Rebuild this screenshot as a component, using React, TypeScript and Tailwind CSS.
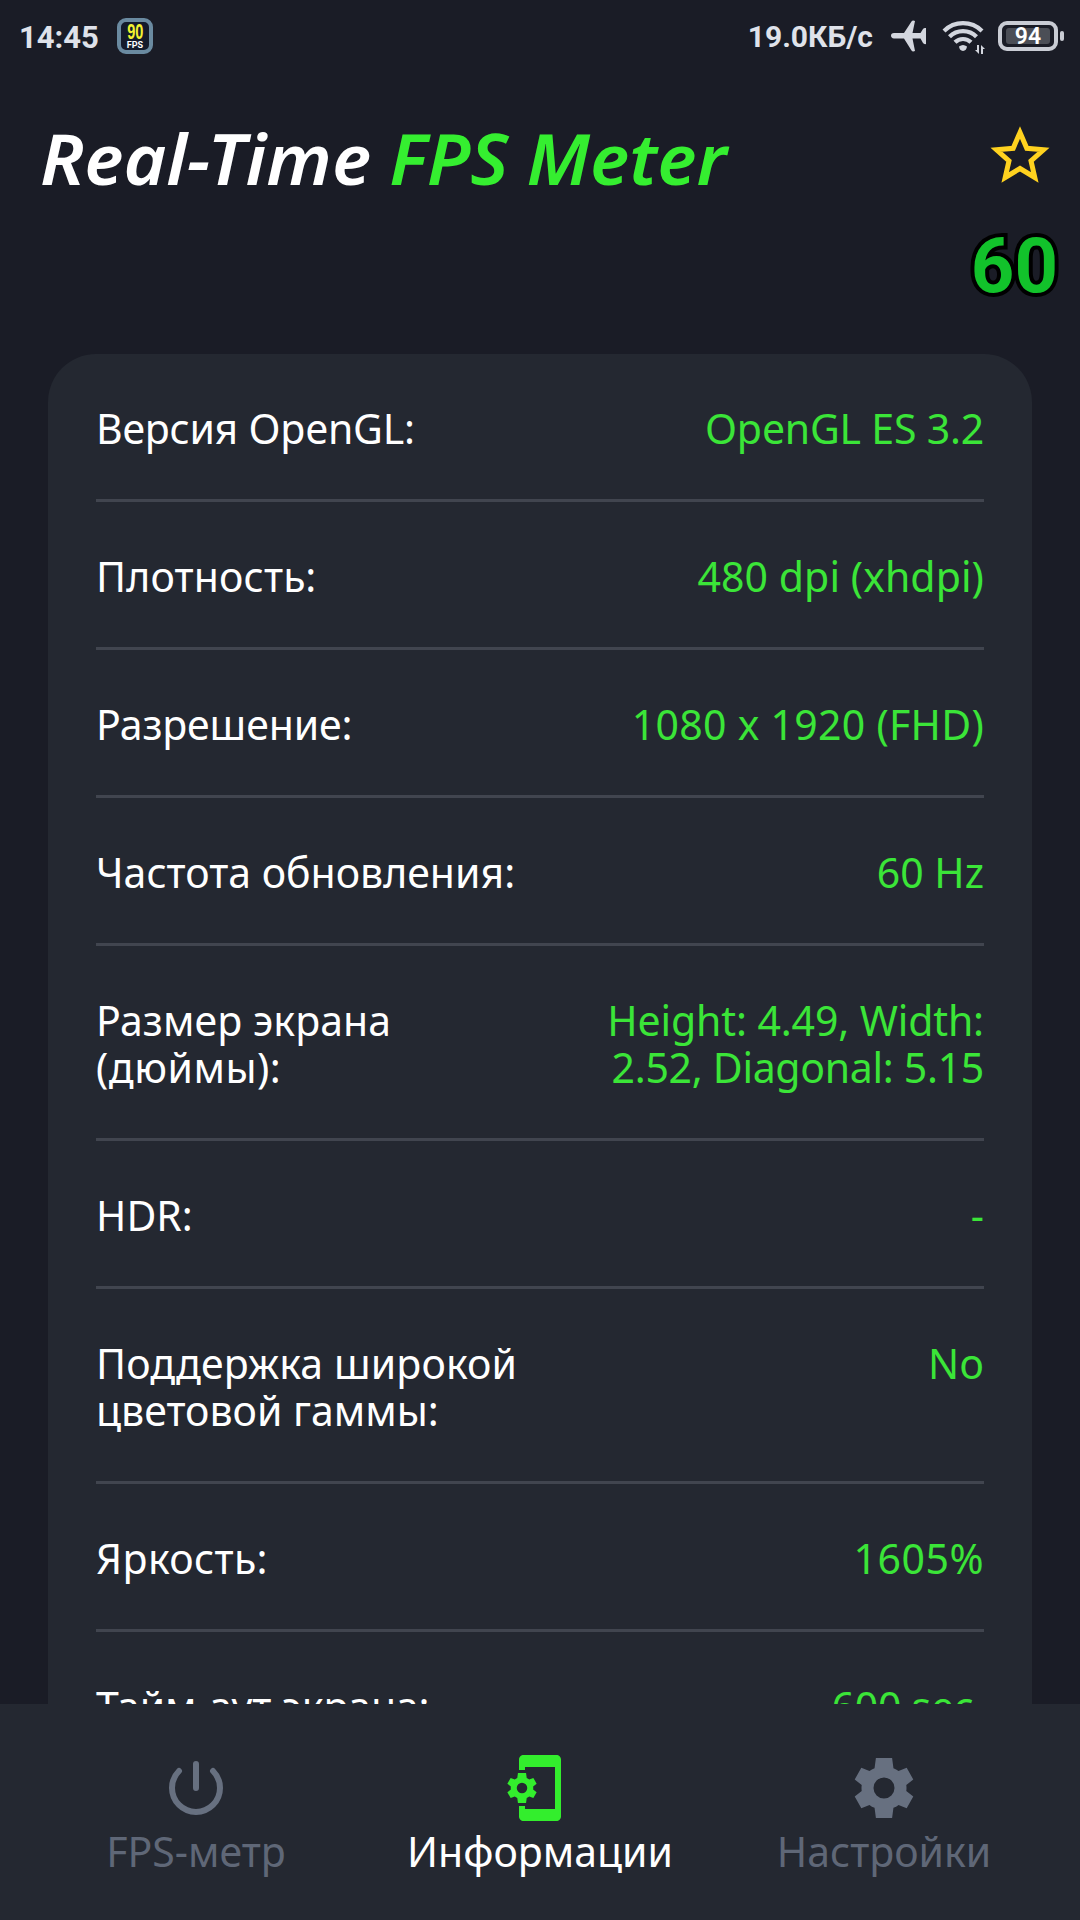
import type { ReactNode } from 'react'

type Line = { text: string; tracking?: string }

type Row = {
  label: Line[]
  value: Line[]
}

const ROWS: Row[] = [
  {
    label: [{ text: 'Версия OpenGL:', tracking: 'tracking-[-0.25px]' }],
    value: [{ text: 'OpenGL ES 3.2', tracking: 'tracking-[-0.2px]' }],
  },
  {
    label: [{ text: 'Плотность:', tracking: 'tracking-[0.15px]' }],
    value: [{ text: '480 dpi (xhdpi)', tracking: 'tracking-[0.08px]' }],
  },
  {
    label: [{ text: 'Разрешение:', tracking: 'tracking-[-0.1px]' }],
    value: [{ text: '1080 x 1920 (FHD)', tracking: 'tracking-[0.28px]' }],
  },
  { label: [{ text: 'Частота обновления:' }], value: [{ text: '60 Hz' }] },
  {
    label: [{ text: 'Размер экрана', tracking: 'tracking-[0.1px]' }, { text: '(дюймы):', tracking: 'tracking-[0.5px]' }],
    value: [
      { text: 'Height: 4.49, Width:', tracking: 'tracking-[-0.12px]' },
      { text: '2.52, Diagonal: 5.15', tracking: 'tracking-[-0.3px]' },
    ],
  },
  { label: [{ text: 'HDR:' }], value: [{ text: '-' }] },
  {
    label: [{ text: 'Поддержка широкой', tracking: 'tracking-[0.12px]' }, { text: 'цветовой гаммы:' }],
    value: [{ text: 'No' }],
  },
  {
    label: [{ text: 'Яркость:', tracking: 'tracking-[0.4px]' }],
    value: [{ text: '1605%', tracking: 'tracking-[0.5px]' }],
  },
  {
    label: [{ text: 'Тайм-аут экрана:', tracking: 'tracking-[-0.15px]' }],
    value: [{ text: '600 sec.', tracking: 'tracking-[-0.25px]' }],
  },
]

const GEAR =
  'M19.43 12.98c.04-.32.07-.64.07-.98s-.03-.66-.07-.98l2.33-1.82-2.2-3.94-2.72 1.1c-.52-.4-1.08-.73-1.69-.98L14.7 2H9.3l-.45 3.38c-.61.25-1.17.59-1.69.98l-2.72-1.1-2.2 3.94 2.33 1.82c-.04.32-.07.65-.07.98s.03.66.07.98l-2.33 1.82 2.2 3.94 2.72-1.1c.52.4 1.08.73 1.69.98L9.3 22h5.4l.45-3.38c.61-.25 1.17-.59 1.69-.98l2.72 1.1 2.2-3.94-2.33-1.82zM12 15.5a3.5 3.5 0 1 1 0-7 3.5 3.5 0 0 1 0 7z'

function StatusBar() {
  return (
    <div className="flex h-[72px] items-center pl-[19px] pr-[16px] font-[Roboto] text-[#dfe2ea]">
      <span className="mt-[2px] text-[31px] font-bold leading-none">14:45</span>
      <span className="ml-[18px] flex h-[36px] w-[36px] flex-col items-center justify-center rounded-[9px] border-[4px] border-[#6a8aa0] bg-[#141b2c]">
        <span className="scale-x-[.66] font-['Liberation_Sans'] text-[22px] font-bold leading-[18px] text-[#f2f230]">90</span>
        <span className="text-[9px] font-bold leading-[9px] text-white">FPS</span>
      </span>
      <span className="ml-auto mt-[2px] text-[30px] font-bold leading-none">19.0КБ/с</span>
      <svg className="ml-[18px]" width="36" height="32" viewBox="0 0 36 32" fill="#d3d6de">
        <path d="M0 15.500Q0 13 3 13H13L20.500 1.500Q21.500 0 24 1L21.500 13H29.500L32 9Q33 7.500 35 8V24Q33 24.500 32 23L29.500 18.500H21.500L24 31Q21.500 32 20.500 30.500L13 18.500H3Q0 18 0 15.500z" />
      </svg>
      <svg className="ml-[14px]" width="46" height="36" viewBox="0 0 46 36" fill="none" stroke="#d3d6de" strokeWidth="4.200">
        <path d="M3 13A27 27 0 0 1 41 13M8.500 18.700A19 19 0 0 1 35.500 18.700M14 24.300A11.300 11.300 0 0 1 30 24.300" />
        <path d="M18 28.500Q22 25.500 26 28.500Q25.500 32.500 22 33Q18.500 32.500 18 28.500z" fill="#d3d6de" stroke="none" />
        {/* up / down traffic arrows */}
        <path d="M36 27h2v9l-4-4h2zM40 36h2v-5h2l-4-4z" fill="#d3d6de" stroke="none" />
      </svg>
      <span className="ml-[11px] flex h-[30px] w-[60px] items-center justify-center rounded-[9px] border-[4px] border-[#c9ccd4]">
        <span className="flex h-[16px] w-[44px] items-center justify-center rounded-[3px] bg-[#4b4e56] text-[23px] font-semibold leading-none text-white">94</span>
      </span>
      <span className="ml-[2px] h-[10px] w-[4px] rounded-[2px] bg-[#c9ccd4]" />
    </div>
  )
}

function Header() {
  return (
    <header className="flex h-[282px] items-start justify-between pl-[40px] pr-[22px]">
      <h1 className="mt-[38px] origin-left scale-x-[1.048] whitespace-nowrap text-[70px] font-semibold italic leading-[96px] text-white [word-spacing:-1px]">
        Real-Time <span className="text-[#35ee30]">FPS Meter</span>
      </h1>
      <div className="flex flex-col items-end">
        <svg className="mr-[8px] mt-[54px]" width="60" height="58" viewBox="0 0 60 58" fill="none" stroke="#ffd21f" strokeWidth="5">
          <path d="M30 6.500L36.800 22.300 53.500 23.800 41 34.800 44.800 51.500 30 42.500 15.200 51.500 19 34.800 6.500 23.800 23.200 22.300z" />
        </svg>
        <span className="mt-[44px] font-[Roboto] text-[76px] font-bold leading-[76px] text-[#12c22b] [-webkit-text-stroke:8px_black] [paint-order:stroke_fill]">
          60
        </span>
      </div>
    </header>
  )
}

function InfoRow({ row }: { row: Row }) {
  return (
    <div className="flex shrink-0 justify-between border-b-[3px] border-[#41454f] pb-[47px] pt-[51px] text-[41px] leading-[47px]">
      <div className="text-white">
        {row.label.map((line) => (
          <div key={line.text} className={line.tracking}>
            {line.text}
          </div>
        ))}
      </div>
      <div className="text-right text-[#3be538]">
        {row.value.map((line) => (
          <div key={line.text} className={line.tracking}>
            {line.text}
          </div>
        ))}
      </div>
    </div>
  )
}

function Tab({ label, active, children }: { label: string; active?: boolean; children: ReactNode }) {
  return (
    <div className={`flex flex-1 flex-col items-center pt-[48px] ${active ? 'text-white' : 'text-[#5f6777]'}`}>
      {children}
      <span className="text-[41px] leading-[54px]">{label}</span>
    </div>
  )
}

export default function App() {
  return (
    <div className="flex h-[1920px] w-[1080px] flex-col overflow-hidden bg-[#1a1c26] font-['Noto_Sans',sans-serif]">
      <StatusBar />
      <Header />
      <main className="mx-[48px] min-h-0 flex-1 overflow-hidden rounded-t-[48px] bg-[#242831] px-[48px]">
        {ROWS.map((row) => (
          <InfoRow key={row.label[0].text} row={row} />
        ))}
      </main>
      <nav className="flex h-[216px] shrink-0 bg-[#242831] px-[24px]">
        <Tab label="FPS-метр">
          <svg width="72" height="72" viewBox="0 0 72 72" fill="none" stroke="#677080" strokeWidth="6" strokeLinecap="round">
            <path d="M36 12V36M19 19A24 24 0 1 0 53 19" />
          </svg>
        </Tab>
        <Tab label="Информации" active>
          {/* phone with a gear on its left edge */}
          <svg className="mr-[12px]" width="72" height="72" viewBox="0 0 24 24" fill="#33ee2d">
            <path d="M19.500 1H8.500C7.700 1 7 1.700 7 2.500V6h2V5h10v14H9v-1H7v3.500c0 .8.7 1.500 1.500 1.500h11c.8 0 1.500-.7 1.500-1.500v-19c0-.8-.7-1.500-1.500-1.500z" />
            <path d={GEAR} transform="translate(2 6) scale(.5)" />
          </svg>
        </Tab>
        <Tab label="Настройки">
          <svg width="72" height="72" viewBox="0 0 24 24" fill="#677080">
            <path d={GEAR} />
          </svg>
        </Tab>
      </nav>
    </div>
  )
}
